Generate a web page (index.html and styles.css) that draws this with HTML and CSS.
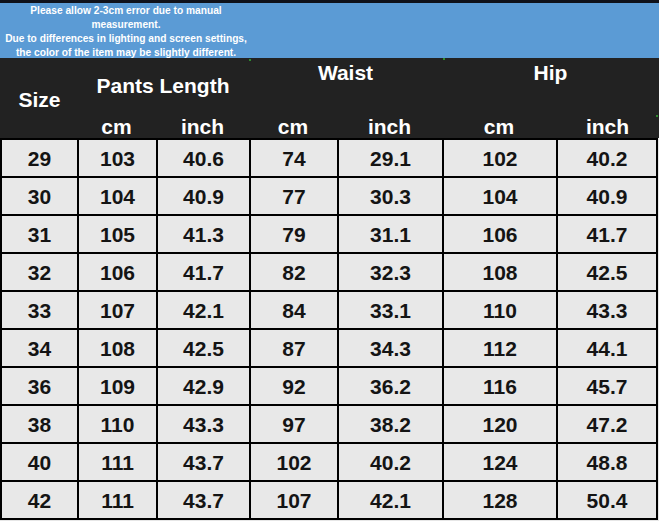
FILE: index.html
```html
<!DOCTYPE html>
<html>
<head>
<meta charset="utf-8">
<link rel="stylesheet" href="styles.css">
</head>
<body>
<div class="page">
  <div class="strip"></div>
  <div class="banner">
    <div class="note">Please allow 2-3cm error due to manual<br>measurement.<br>Due to differences in lighting and screen settings,<br>the color of the item may be slightly different.</div>
  </div>
  <div class="head">
    <div class="h size">Size</div>
    <div class="h group pants">Pants Length</div>
    <div class="h group waist">Waist</div>
    <div class="h group hip">Hip</div>
    <div class="h sub">cm</div>
    <div class="h sub">inch</div>
    <div class="h sub">cm</div>
    <div class="h sub">inch</div>
    <div class="h sub">cm</div>
    <div class="h sub">inch</div>
    <span class="mark m1"></span>
    <span class="mark m2"></span>
    <span class="mark m3"></span>
  </div>
  <div class="body">
    <div class="c">29</div><div class="c">103</div><div class="c">40.6</div><div class="c">74</div><div class="c">29.1</div><div class="c">102</div><div class="c">40.2</div>
    <div class="c">30</div><div class="c">104</div><div class="c">40.9</div><div class="c">77</div><div class="c">30.3</div><div class="c">104</div><div class="c">40.9</div>
    <div class="c">31</div><div class="c">105</div><div class="c">41.3</div><div class="c">79</div><div class="c">31.1</div><div class="c">106</div><div class="c">41.7</div>
    <div class="c">32</div><div class="c">106</div><div class="c">41.7</div><div class="c">82</div><div class="c">32.3</div><div class="c">108</div><div class="c">42.5</div>
    <div class="c">33</div><div class="c">107</div><div class="c">42.1</div><div class="c">84</div><div class="c">33.1</div><div class="c">110</div><div class="c">43.3</div>
    <div class="c">34</div><div class="c">108</div><div class="c">42.5</div><div class="c">87</div><div class="c">34.3</div><div class="c">112</div><div class="c">44.1</div>
    <div class="c">36</div><div class="c">109</div><div class="c">42.9</div><div class="c">92</div><div class="c">36.2</div><div class="c">116</div><div class="c">45.7</div>
    <div class="c">38</div><div class="c">110</div><div class="c">43.3</div><div class="c">97</div><div class="c">38.2</div><div class="c">120</div><div class="c">47.2</div>
    <div class="c">40</div><div class="c">111</div><div class="c">43.7</div><div class="c">102</div><div class="c">40.2</div><div class="c">124</div><div class="c">48.8</div>
    <div class="c">42</div><div class="c">111</div><div class="c">43.7</div><div class="c">107</div><div class="c">42.1</div><div class="c">128</div><div class="c">50.4</div>
  </div>
</div>
</body>
</html>
```
FILE: styles.css
```css
html, body {
  margin: 0;
  padding: 0;
  background: #e6e6e6;
}
.page {
  width: 659px;
  height: 521px;
  overflow: hidden;
  font-family: "Liberation Sans", Arial, sans-serif;
  font-weight: bold;
}
.strip {
  height: 3px;
  background: #0f121b;
}
.banner {
  height: 55px;
  background: #5b9bd5;
}
.note {
  width: 252px;
  text-align: center;
  color: #fff;
  font-size: 10.2px;
  line-height: 14px;
  padding-top: 1px;
}
.head {
  position: relative;
  height: 80px;
  background: #222222;
  color: #fff;
  display: grid;
  grid-template-columns: 77px 79px 93px 88px 105px 114px 103px;
  grid-template-rows: 54px 26px;
  font-size: 21px;
  line-height: 20px;
}
.h {
  text-align: center;
}
.size {
  grid-row: 1 / 3;
  grid-column: 1;
  padding-left: 2px;
  padding-top: 32px;
}
.group.pants {
  grid-column: 2 / 4;
  padding-top: 18px;
}
.group.waist {
  grid-column: 4 / 6;
  padding-top: 5px;
}
.group.hip {
  grid-column: 6 / 8;
  padding-top: 5px;
}
.sub {
  grid-row: 2;
  padding-top: 5px;
}
.mark {
  position: absolute;
  width: 2px;
  height: 2px;
  background: #2e8b2e;
}
.m1 { left: 249px; top: 1px; }
.m2 { left: 443px; top: 0px; }
.m3 { left: 656px; top: 57px; }
.body {
  display: grid;
  grid-template-columns: 75px 77px 91px 86px 103px 112px 98px;
  grid-auto-rows: 36px;
  gap: 2px;
  padding: 2px;
  width: 654px;
  background: #000;
}
.c {
  background: #e8e8e8;
  color: #141414;
  font-size: 21px;
  display: flex;
  align-items: center;
  justify-content: center;
  padding-top: 1px;
}
```
